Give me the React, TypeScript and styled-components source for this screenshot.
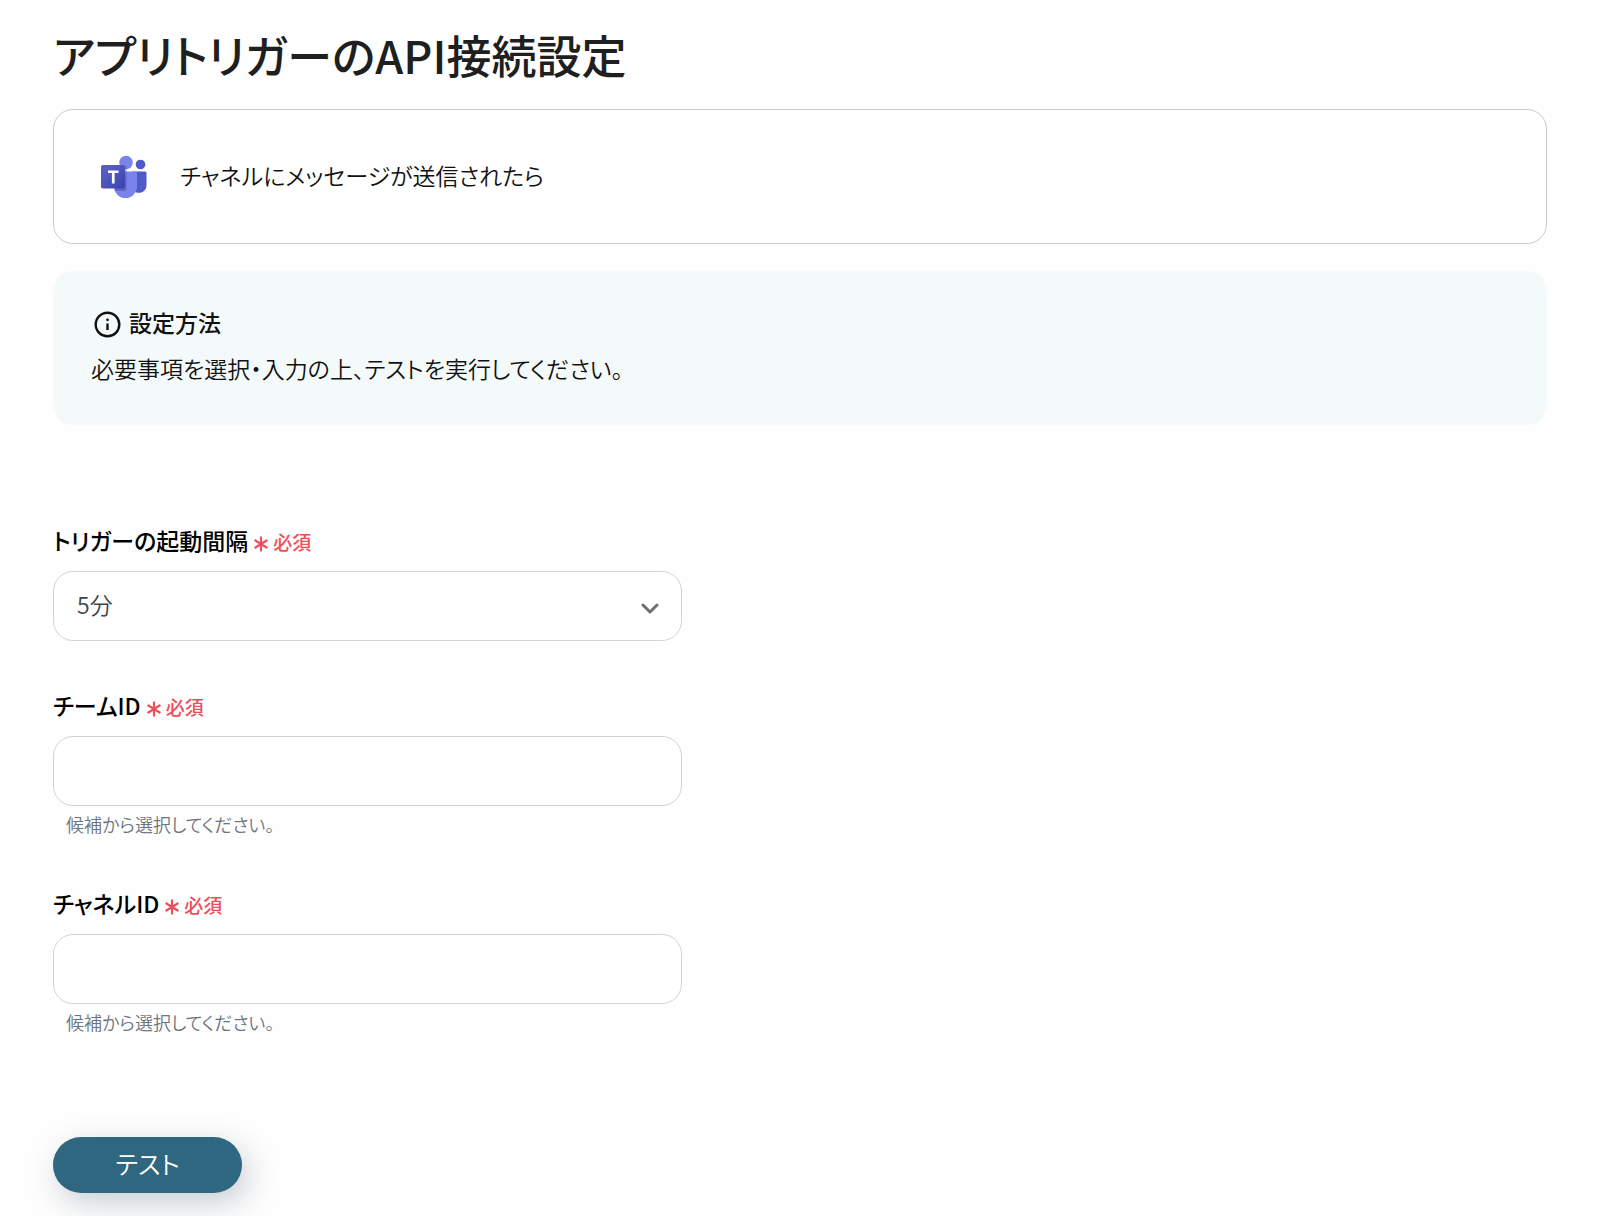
import React, { useId, useState } from "react";
import styled, { createGlobalStyle } from "styled-components";

const GlobalStyle = createGlobalStyle`
  *, *::before, *::after { box-sizing: border-box; }
  body {
    margin: 0;
    background: #fefefe;
    color: #1f1f1f;
    font-family: "Noto Sans CJK JP", "Noto Sans", sans-serif;
    font-feature-settings: "palt";
    font-size: 23px;
    font-weight: 350;
    line-height: 32px;
  }
  button, input, select { font: inherit; font-feature-settings: inherit; }
`;

const Page = styled.main`
  padding: 23px 53px;
`;

const Title = styled.h1`
  margin: 0 0 22px;
  font-size: 45px;
  line-height: 64px;
  font-weight: 500;
`;

const TriggerCard = styled.section`
  display: flex;
  align-items: center;
  gap: 32px;
  padding: 45px 46px 44px;
  border: 1px solid #cbcbcb;
  border-radius: 20px;
  background: #fff;
`;

const TriggerName = styled.p`
  margin: 0;
  padding-bottom: 4px;
  color: #111;
`;

const Guide = styled.section`
  margin-top: 27px;
  padding: 35px 38px 41px;
  border-radius: 20px;
  background: #f4fafa;
  color: #111;
`;

const GuideTitle = styled.h2`
  display: flex;
  align-items: flex-end;
  gap: 8px;
  margin: 0 0 14px;
  padding-left: 3px;
  font-size: 23px;
  line-height: 32px;
  font-weight: 500;
`;

const GuideText = styled.p`
  margin: 0;
`;

const Form = styled.form`
  display: flex;
  flex-direction: column;
  align-items: flex-start;
  gap: 48px;
  margin-top: 99px;
`;

const Field = styled.div`
  width: 100%;
  max-width: 629px;
`;

const Label = styled.label`
  display: flex;
  align-items: baseline;
  gap: 6px;
  margin-bottom: 13px;
  color: #000;
  font-weight: 500;
`;

const Required = styled.span`
  display: inline-flex;
  align-items: baseline;
  gap: 5px;
  color: #ee4e5b;
  font-size: 19px;

  svg { align-self: center; }
`;

const TextInput = styled.input`
  display: block;
  width: 100%;
  height: 70px;
  padding: 0 23px 4px;
  border: 1px solid #d0d3d8;
  border-radius: 20px;
  background: #fff;
  color: #3d444d;
`;

const SelectWrap = styled.div`
  position: relative;
`;

const Select = styled.select`
  display: block;
  width: 100%;
  height: 70px;
  padding: 0 60px 4px 23px;
  border: 1px solid #d0d3d8;
  border-radius: 20px;
  background: #fff;
  color: #3d444d;
  appearance: none;
`;

const Chevron = styled.svg`
  position: absolute;
  top: 31px;
  right: 23px;
  pointer-events: none;
`;

const Help = styled.p`
  margin: 3px 0 0;
  padding-left: 13px;
  color: #6c757d;
  font-size: 18px;
  line-height: 30px;
`;

const SubmitButton = styled.button`
  width: 189px;
  height: 56px;
  margin-top: 52px;
  padding: 0 0 4px;
  border: 0;
  border-radius: 28px;
  background: #2f6680;
  color: #fff;
  font-size: 25px;
  box-shadow: 6px 10px 32px rgba(40, 60, 80, 0.25);
  cursor: pointer;
`;

function TeamsIcon() {
  return (
    <svg width="48" height="44" viewBox="0 0 48 44" aria-hidden="true">
      <defs>
        <linearGradient id="tile" x1="0" y1="0" x2="1" y2="1">
          <stop offset="0" stopColor="#5a62c3" />
          <stop offset="0.5" stopColor="#4d55bd" />
          <stop offset="1" stopColor="#3940ab" />
        </linearGradient>
      </defs>
      <circle cx="40.5" cy="9.5" r="4.8" fill="#5059c9" />
      <path d="M32 16.5h13q1.500 0 1.500 1.500v12a7.500 7.500 0 0 1-14.500 3z" fill="#5059c9" />
      <circle cx="26" cy="7.500" r="6.800" fill="#7b83eb" />
      <path d="M16 16.500h19.500q1.500 0 1.500 1.500v13.500a11.500 11.500 0 0 1-23 0v-13z" fill="#7b83eb" />
      <path d="M18 11h6q2.500 0 2.500 2.500v20q0 2.500-2.500 2.500h-9V14z" fill="#343b91" opacity="0.4" />
      <rect x="1" y="10" width="24" height="23.500" rx="2" fill="url(#tile)" />
      <path d="M8 15.500h10.500v2.500h-3.900v10.500h-2.700V18H8z" fill="#fff" />
    </svg>
  );
}

function InfoIcon() {
  return (
    <svg width="27" height="27" viewBox="0 0 27 27" fill="none" aria-hidden="true">
      <circle cx="13.500" cy="13.500" r="11.800" stroke="#111" strokeWidth="2.400" />
      <path d="M13.500 12.500v6.500" stroke="#111" strokeWidth="2.400" />
      <circle cx="13.500" cy="8.800" r="1.400" fill="#111" />
    </svg>
  );
}

function RequiredMark() {
  return (
    <Required>
      <svg width="14" height="20" viewBox="0 0 14 20" fill="none" aria-hidden="true">
        <path d="M7 4.500v15M0.600 8l12.800 8M13.400 8l-12.800 8" stroke="currentColor" strokeWidth="2.100" />
      </svg>
      必須
    </Required>
  );
}

function IdField({ label }: { label: string }) {
  const id = useId();
  const [value, setValue] = useState("");
  return (
    <Field>
      <Label htmlFor={id}>
        {label}
        <RequiredMark />
      </Label>
      <TextInput
        id={id}
        type="text"
        required
        aria-describedby={`${id}-help`}
        value={value}
        onChange={(e) => setValue(e.target.value)}
      />
      <Help id={`${id}-help`}>候補から選択してください。</Help>
    </Field>
  );
}

export default function App() {
  return (
    <>
      <GlobalStyle />
      <Page>
        <Title>アプリトリガーのAPI接続設定</Title>
        <TriggerCard>
          <TeamsIcon />
          <TriggerName>チャネルにメッセージが送信されたら</TriggerName>
        </TriggerCard>
        <Guide>
          <GuideTitle>
            <InfoIcon />
            設定方法
          </GuideTitle>
          <GuideText>必要事項を選択・入力の上、テストを実行してください。</GuideText>
        </Guide>
        <Form onSubmit={(e) => e.preventDefault()}>
          <Field>
            <Label htmlFor="interval">
              トリガーの起動間隔
              <RequiredMark />
            </Label>
            <SelectWrap>
              <Select id="interval" required defaultValue="5">
                <option value="5">5分</option>
              </Select>
              <Chevron width="18" height="12" viewBox="0 0 18 12" fill="none" aria-hidden="true">
                <path d="M2 3l7 7 7-7" stroke="#6f6f6f" strokeWidth="3" strokeLinecap="round" strokeLinejoin="round" />
              </Chevron>
            </SelectWrap>
          </Field>
          <IdField label="チームID" />
          <IdField label="チャネルID" />
          <SubmitButton type="submit">テスト</SubmitButton>
        </Form>
      </Page>
    </>
  );
}
